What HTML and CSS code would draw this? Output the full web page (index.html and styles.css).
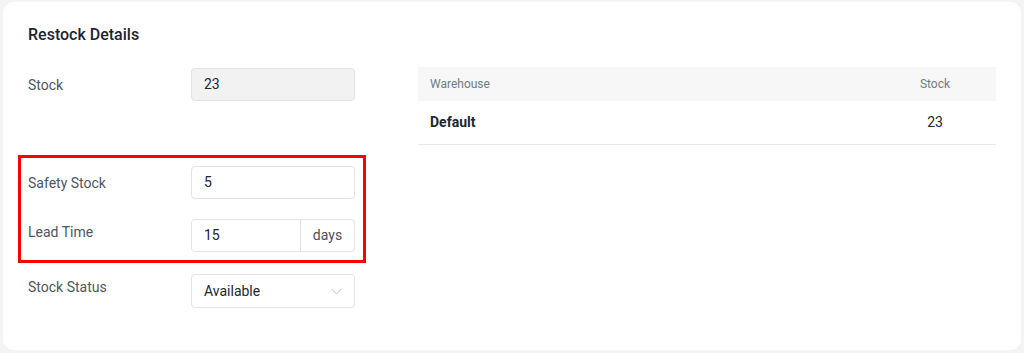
FILE: index.html
```html
<!DOCTYPE html>
<html lang="en">
<head>
    <meta charset="UTF-8">
    <meta name="viewport" content="width=device-width, initial-scale=1.0">
    <title>Restock Details</title>
    <link rel="stylesheet" href="styles.css">
</head>
<body>
    <div class="card">
        <h2 class="titulo">Restock Details</h2>

        <div class="conteudo">
            <div class="campos">
                <div class="campo">
                    <label class="rotulo">Stock</label>
                    <div class="caixa desativada">23</div>
                </div>

                <div class="destaque">
                    <div class="campo">
                        <label class="rotulo">Safety Stock</label>
                        <div class="caixa">5</div>
                    </div>
                    <div class="campo topo">
                        <label class="rotulo">Lead Time</label>
                        <div class="grupo">
                            <div class="caixa valor">15</div>
                            <div class="sufixo">days</div>
                        </div>
                    </div>
                </div>

                <div class="campo topo status">
                    <label class="rotulo">Stock Status</label>
                    <div class="caixa seletor">
                        <span>Available</span>
                        <svg width="11" height="7" viewBox="0 0 11 7" fill="none" stroke="#b9bec4" stroke-width="1">
                            <path d="M0.5 0.8 L5.5 6 L10.5 0.8"/>
                        </svg>
                    </div>
                </div>
            </div>

            <table class="tabela">
                <thead>
                    <tr>
                        <th>Warehouse</th>
                        <th class="num">Stock</th>
                    </tr>
                </thead>
                <tbody>
                    <tr>
                        <td class="nome">Default</td>
                        <td class="num">23</td>
                    </tr>
                </tbody>
            </table>
        </div>
    </div>
</body>
</html>
```

FILE: styles.css
```css
*{
    margin: 0;
    padding: 0;
    box-sizing: border-box;
}
body{
    background-color: #f4f4f5;
    font-family: Roboto, "Liberation Sans", sans-serif;
    color: #22272e;
    padding: 2px 3px 3px 3px;
}
.card{
    background-color: #ffffff;
    border-radius: 10px;
    height: 348px;
    padding: 21px 25px 0 25px;
}
.titulo{
    font-size: 16px;
    font-weight: 500;
    line-height: 24px;
    color: #1c2430;
    margin-bottom: 20px;
}
.conteudo{
    display: flex;
    flex-direction: row;
    gap: 63px;
    align-items: flex-start;
}
.campos{
    width: 327px;
    display: flex;
    flex-direction: column;
    padding-top: 1px;
}
.campo{
    display: flex;
    flex-direction: row;
    align-items: center;
}
.campo.topo{
    align-items: flex-start;
}
.campo.topo .rotulo{
    padding-top: 3px;
}
.rotulo{
    width: 163px;
    font-size: 14px;
    line-height: 20px;
    color: #4f555e;
}
.caixa{
    width: 164px;
    height: 33px;
    border: 1px solid #e1e3e6;
    border-radius: 4px;
    padding: 0 12px;
    font-size: 14px;
    line-height: 31px;
    color: #22272e;
    background-color: #ffffff;
}
.desativada{
    background-color: #f2f2f3;
}
.destaque{
    border: 3px solid #ff0000;
    margin: 54px 0 0 -10px;
    width: 348px;
    padding: 8px 8px 8px 7px;
    display: flex;
    flex-direction: column;
    gap: 20px;
}
.grupo{
    display: flex;
    width: 164px;
    height: 33px;
    border: 1px solid #e1e3e6;
    border-radius: 4px;
}
.grupo .valor{
    border: none;
    height: 31px;
    width: 109px;
    border-right: 1px solid #e1e3e6;
    border-radius: 4px 0 0 4px;
}
.sufixo{
    flex: 1;
    text-align: center;
    font-size: 14px;
    line-height: 31px;
    color: #4a5059;
}
.status{
    margin-top: 11px;
}
.status .rotulo{
    padding-top: 2px;
}
.seletor{
    height: 34px;
    line-height: 32px;
    display: flex;
    justify-content: space-between;
    align-items: center;
}
.tabela{
    flex: 1;
    border-collapse: collapse;
    font-size: 14px;
}
.tabela th{
    background-color: #f7f7f8;
    height: 34px;
    font-size: 12px;
    font-weight: 400;
    color: #737a83;
    text-align: left;
    padding: 0 12px;
}
.tabela td{
    height: 43px;
    border-bottom: 1px solid #e9eaec;
    padding: 0 12px;
    color: #22272e;
}
.tabela .num{
    width: 122px;
    text-align: center;
}
.nome{
    font-weight: 700;
}
```
